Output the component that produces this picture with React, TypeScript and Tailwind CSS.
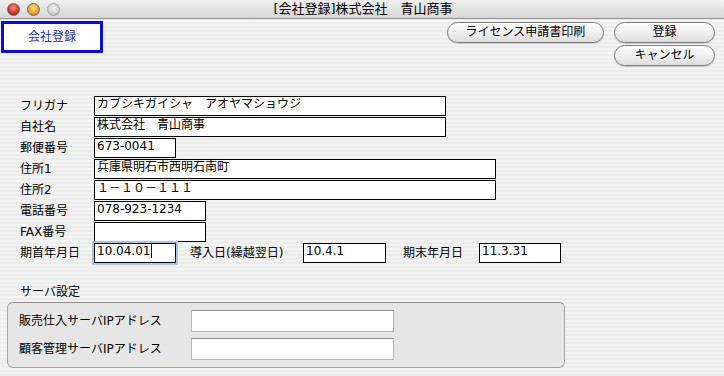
import React from 'react';

const font = "font-['DejaVu_Sans','Noto_Sans_CJK_JP',sans-serif]";

const Light = ({ color }: { color: string }) => (
  <div className={`w-[13px] h-[13px] rounded-full border border-[#6a6a6a] ${color}`} />
);

const Pill = ({ label, w }: { label: string; w: string }) => (
  <button
    className={`${w} h-[21px] rounded-full border border-[#7b7b7b] bg-[linear-gradient(#ffffff,#f0f0f0_50%,#dcdcdc)] text-[12px] leading-[19px] text-black shadow-[0_1px_1px_rgba(0,0,0,0.15)]`}
  >
    {label}
  </button>
);

const Field = ({ w, value, focus }: { w: string; value?: string; focus?: boolean }) => (
  <div
    className={`${w} h-[20px] bg-white border border-black px-[2px] text-[12px] leading-[15px] text-black whitespace-pre ${
      focus ? 'shadow-[0_0_0_2px_#a9c4e6]' : ''
    }`}
  >
    {value}
    {focus && <span className="inline-block w-px h-[14px] bg-black align-top ml-px" />}
  </div>
);

const Row = ({ label, children }: { label: string; children: React.ReactNode }) => (
  <div className="flex items-center h-[20px] mt-px">
    <div className="w-[74px] text-[12px] text-black">{label}</div>
    {children}
  </div>
);

export default function App() {
  return (
    <div
      className={`${font} w-[724px] h-[376px] overflow-hidden bg-[repeating-linear-gradient(0deg,#ececec_0px,#ececec_2px,#f3f3f3_2px,#f3f3f3_4px)] text-black`}
    >
      {/* title bar */}
      <div className="relative h-[19px] border-b border-[#8f8f8f] bg-[linear-gradient(#f0f0f0,#d6d6d6)] flex items-center">
        <div className="flex gap-[7px] pl-[7px]">
          <Light color="bg-[radial-gradient(circle_at_50%_35%,#ff9a8a,#d8261c_60%,#9c1208)]" />
          <Light color="bg-[radial-gradient(circle_at_50%_35%,#ffe08a,#f0a018_60%,#b8700a)]" />
          <Light color="bg-[radial-gradient(circle_at_50%_35%,#f4f4f4,#cfcfcf_60%,#a8a8a8)] border-[#a0a0a0]" />
        </div>
        <div className="absolute inset-0 flex items-center justify-center text-[13px] text-black pl-[2px]">
          [会社登録]株式会社　青山商事
        </div>
      </div>

      {/* header */}
      <div className="flex pl-px pt-[2px]">
        <div className="w-[102px] h-[32px] border-[3px] border-[#0b0bd8] bg-white flex items-center justify-center text-[12px] text-[#2233cc]">
          会社登録
        </div>
        <div className="ml-auto mr-[9px] flex gap-[10px] pt-px">
          <Pill label="ライセンス申請書印刷" w="w-[157px]" />
          <div className="flex flex-col gap-[2px]">
            <Pill label="登録" w="w-[101px]" />
            <Pill label="キャンセル" w="w-[101px]" />
          </div>
        </div>
      </div>

      {/* form */}
      <div className="pl-[20px] pt-[29px]">
        <Row label="フリガナ">
          <Field w="w-[352px]" value="カブシキガイシャ　アオヤマショウジ" />
        </Row>
        <Row label="自社名">
          <Field w="w-[352px]" value="株式会社　青山商事" />
        </Row>
        <Row label="郵便番号">
          <Field w="w-[82px]" value="673-0041" />
        </Row>
        <Row label="住所1">
          <Field w="w-[402px]" value="兵庫県明石市西明石南町" />
        </Row>
        <Row label="住所2">
          <Field w="w-[402px]" value="１－１０－１１１" />
        </Row>
        <Row label="電話番号">
          <Field w="w-[112px]" value="078-923-1234" />
        </Row>
        <Row label="FAX番号">
          <Field w="w-[112px]" />
        </Row>
        <Row label="期首年月日">
          <Field w="w-[82px]" value="10.04.01" focus />
          <div className="ml-[14px] w-[113px] text-[12px]">導入日(繰越翌日)</div>
          <Field w="w-[83px]" value="10.4.1" />
          <div className="ml-[17px] w-[76px] text-[12px]">期末年月日</div>
          <Field w="w-[82px]" value="11.3.31" />
        </Row>
      </div>

      {/* server settings */}
      <div className="pl-[20px] pt-[21px] text-[12px] leading-[16px]">サーバ設定</div>
      <div className="ml-[7px] mt-[2px] w-[558px] h-[66px] rounded-[6px] border border-[#a3a3a3] border-t-[#8a8a8a] bg-[#e6e6e6] pl-[11px] pt-[7px] flex flex-col gap-[6px]">
        <div className="flex items-center">
          <div className="w-[172px] text-[12px]">販売仕入サーバIPアドレス</div>
          <div className="w-[203px] h-[22px] bg-white border border-[#b5b5b5] border-t-[#8e8e8e]" />
        </div>
        <div className="flex items-center">
          <div className="w-[172px] text-[12px]">顧客管理サーバIPアドレス</div>
          <div className="w-[203px] h-[22px] bg-white border border-[#b5b5b5] border-t-[#8e8e8e]" />
        </div>
      </div>
    </div>
  );
}
